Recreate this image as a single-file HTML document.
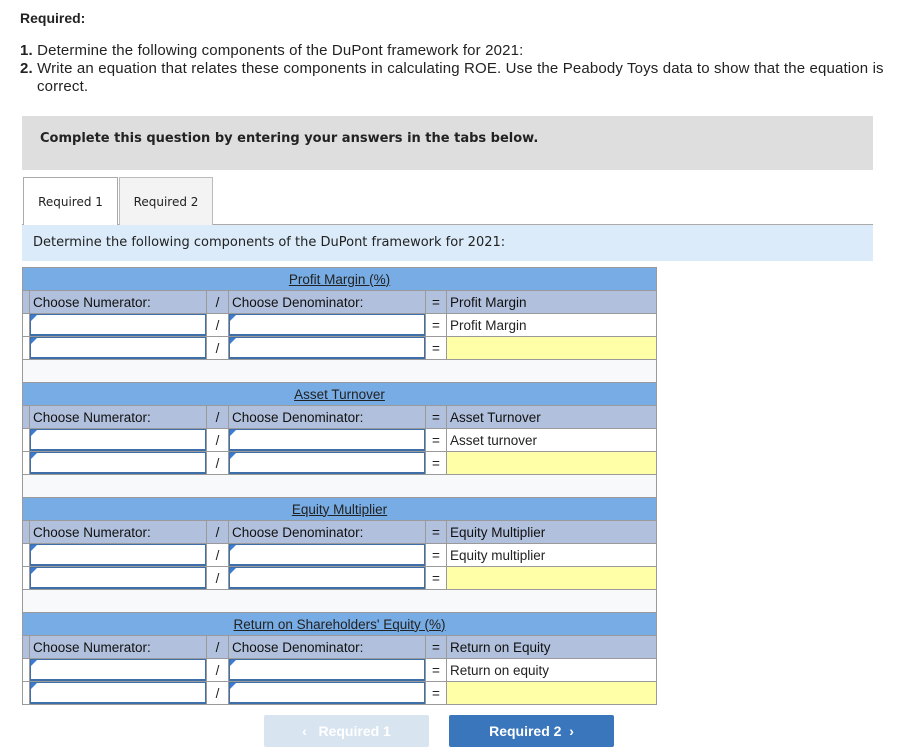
<!DOCTYPE html>
<html><head><style>
body{margin:0;background:#fff;font-family:"Liberation Sans",sans-serif;color:#222;width:906px;height:754px;position:relative;overflow:hidden}
.a{position:absolute}
.t{font-size:15px;line-height:18px;letter-spacing:0.15px}
table{position:absolute;left:22px;width:634px;border-collapse:collapse;table-layout:fixed;font-size:13.5px}
td{border:1px solid #9a9a9a;height:22px;padding:0;white-space:nowrap;overflow:hidden}
.ti td{background:#78ace4;text-align:center;text-decoration:underline;color:#222}
.hd td{background:#b1c0dc;color:#111}
.c{text-align:center}
.l{padding-left:3px}
.in{background:#fff;position:relative;box-shadow:inset 0 0 0 1px #3f6fa8,inset 0 -2px 0 #3f6fa8}
.in:before{content:"";position:absolute;left:1px;top:1px;border-left:6px solid #3a7bd5;border-bottom:6px solid transparent}
.y{background:#ffffa8}
.sp td{background:#f8f9fb}
</style></head><body>
<div class="a t" style="left:20px;top:9px;font-weight:bold;letter-spacing:0;font-size:14px">Required:</div>
<div class="a t" style="left:20px;top:42px;width:900px">
<div><b>1.</b> Determine the following components of the DuPont framework for 2021:</div>
<div style="white-space:nowrap"><b>2.</b> Write an equation that relates these components in calculating ROE. Use the Peabody Toys data to show that the equation is</div>
<div style="padding-left:17px">correct.</div></div>
<div class="a" style="left:22px;top:116px;width:851px;height:54px;background:#dedede"></div>
<div class="a" style="left:40px;top:131px;font-family:'DejaVu Sans',sans-serif;font-weight:bold;font-size:13px">Complete this question by entering your answers in the tabs below.</div>
<div class="a" style="left:22px;top:224px;width:851px;height:1px;background:#aaa"></div>
<div class="a" style="left:23px;top:177px;width:93px;height:48px;border:1px solid #aaa;border-bottom:none;background:#fff;font-family:'DejaVu Sans',sans-serif;font-size:12px;text-align:center;line-height:48px">Required 1</div>
<div class="a" style="left:119px;top:177px;width:92px;height:47px;border:1px solid #bbb;border-bottom:none;background:#f3f3f3;font-family:'DejaVu Sans',sans-serif;font-size:12px;text-align:center;line-height:48px">Required 2</div>
<div class="a" style="left:22px;top:225px;width:851px;height:36px;background:#dbebf9;font-family:'DejaVu Sans',sans-serif;font-size:13px;line-height:36px;padding-left:11px;box-sizing:border-box">Determine the following components of the DuPont framework for 2021:</div>

<table style="top:267px"><colgroup><col style="width:7px"><col style="width:177px"><col style="width:22px"><col style="width:197px"><col style="width:21px"><col style="width:210px"></colgroup>
<tr class="ti"><td colspan="6">Profit Margin (%)</td></tr>
<tr class="hd"><td></td><td class="l">Choose Numerator:</td><td class="c">/</td><td class="l">Choose Denominator:</td><td class="c">=</td><td class="l">Profit Margin</td></tr>
<tr><td></td><td class="in"></td><td class="c">/</td><td class="in"></td><td class="c">=</td><td class="l">Profit Margin</td></tr>
<tr><td></td><td class="in"></td><td class="c">/</td><td class="in"></td><td class="c">=</td><td class="y"></td></tr>
<tr class="sp"><td colspan="6"></td></tr></table>

<table style="top:382px"><colgroup><col style="width:7px"><col style="width:177px"><col style="width:22px"><col style="width:197px"><col style="width:21px"><col style="width:210px"></colgroup>
<tr class="ti"><td colspan="6">Asset Turnover</td></tr>
<tr class="hd"><td></td><td class="l">Choose Numerator:</td><td class="c">/</td><td class="l">Choose Denominator:</td><td class="c">=</td><td class="l">Asset Turnover</td></tr>
<tr><td></td><td class="in"></td><td class="c">/</td><td class="in"></td><td class="c">=</td><td class="l">Asset turnover</td></tr>
<tr><td></td><td class="in"></td><td class="c">/</td><td class="in"></td><td class="c">=</td><td class="y"></td></tr>
<tr class="sp"><td colspan="6"></td></tr></table>

<table style="top:497px"><colgroup><col style="width:7px"><col style="width:177px"><col style="width:22px"><col style="width:197px"><col style="width:21px"><col style="width:210px"></colgroup>
<tr class="ti"><td colspan="6">Equity Multiplier</td></tr>
<tr class="hd"><td></td><td class="l">Choose Numerator:</td><td class="c">/</td><td class="l">Choose Denominator:</td><td class="c">=</td><td class="l">Equity Multiplier</td></tr>
<tr><td></td><td class="in"></td><td class="c">/</td><td class="in"></td><td class="c">=</td><td class="l">Equity multiplier</td></tr>
<tr><td></td><td class="in"></td><td class="c">/</td><td class="in"></td><td class="c">=</td><td class="y"></td></tr>
<tr class="sp"><td colspan="6"></td></tr></table>

<table style="top:612px"><colgroup><col style="width:7px"><col style="width:177px"><col style="width:22px"><col style="width:197px"><col style="width:21px"><col style="width:210px"></colgroup>
<tr class="ti"><td colspan="6">Return on Shareholders' Equity (%)</td></tr>
<tr class="hd"><td></td><td class="l">Choose Numerator:</td><td class="c">/</td><td class="l">Choose Denominator:</td><td class="c">=</td><td class="l">Return on Equity</td></tr>
<tr><td></td><td class="in"></td><td class="c">/</td><td class="in"></td><td class="c">=</td><td class="l">Return on equity</td></tr>
<tr><td></td><td class="in"></td><td class="c">/</td><td class="in"></td><td class="c">=</td><td class="y"></td></tr>
</table>

<div class="a" style="left:264px;top:715px;width:165px;height:32px;background:#d9e4f1;border-radius:2px;color:#fff;font-weight:bold;font-size:14px;text-align:center;line-height:32px">&lsaquo;&nbsp;&nbsp; Required 1</div>
<div class="a" style="left:449px;top:715px;width:165px;height:32px;background:#3a76bb;border-radius:2px;color:#fff;font-weight:bold;font-size:14px;text-align:center;line-height:32px">Required 2 &nbsp;&rsaquo;</div>
</body></html>
